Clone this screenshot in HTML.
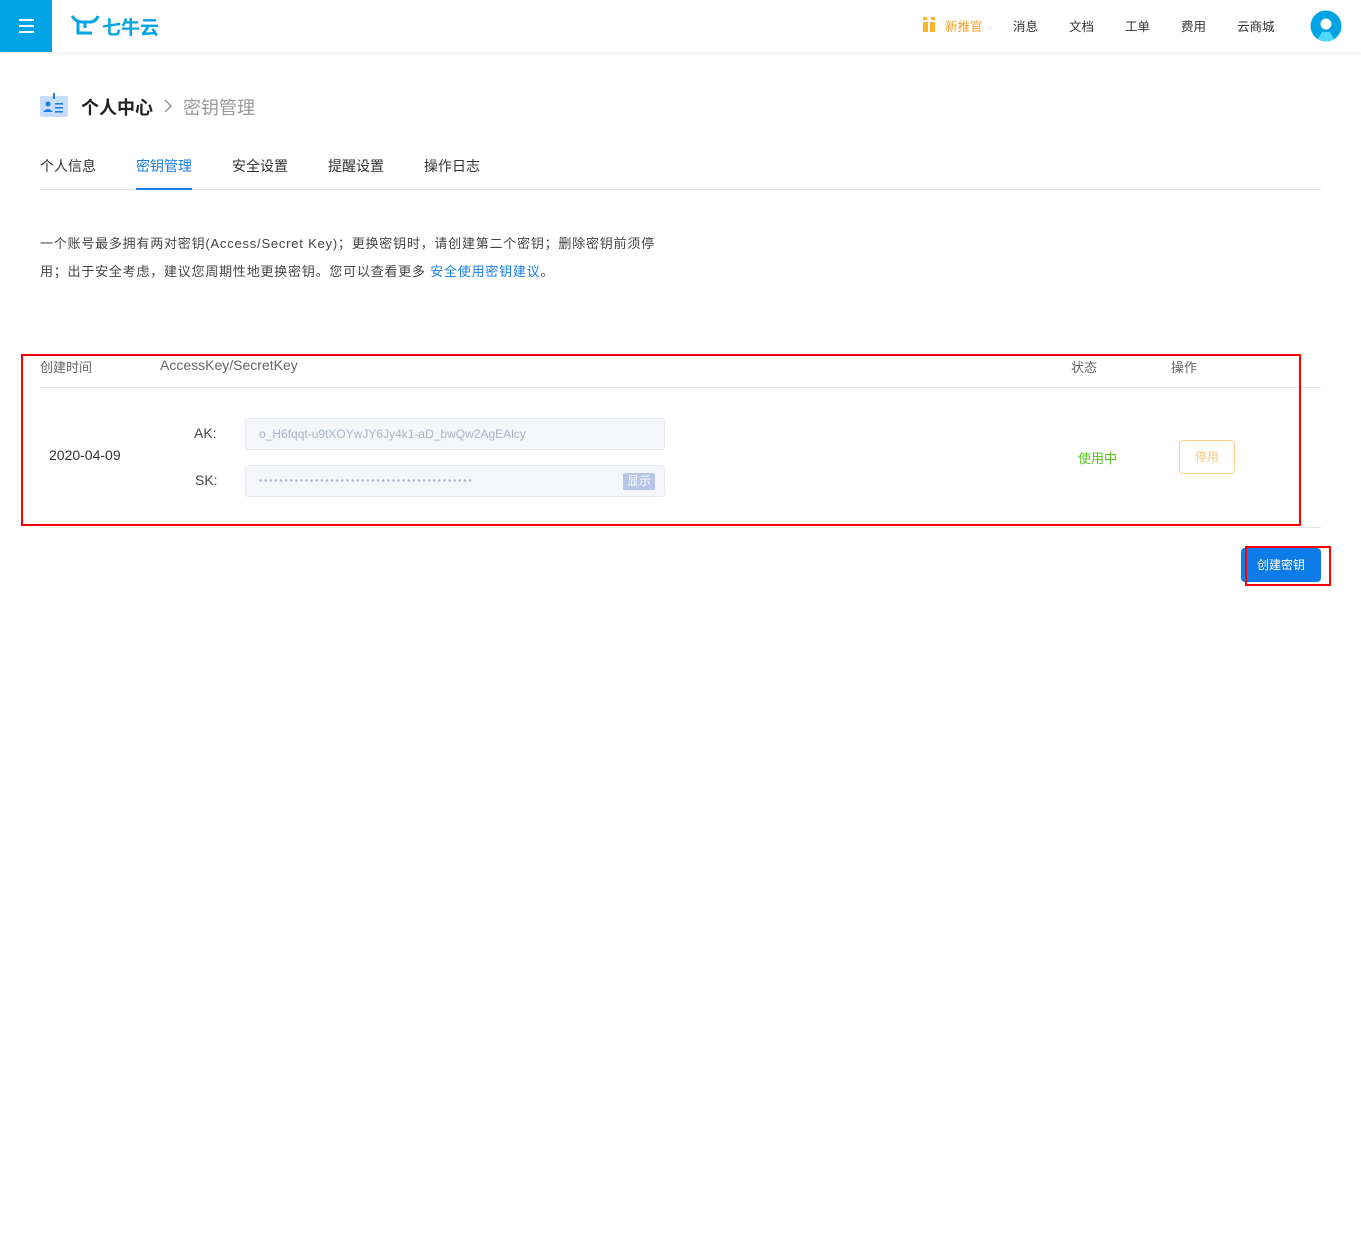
<!DOCTYPE html>
<html><head><meta charset="utf-8"><style>
*{margin:0;padding:0;box-sizing:border-box}
body{width:1361px;height:1257px;background:#fff;font-family:"Liberation Sans","Noto Sans CJK SC",sans-serif;color:#333;position:relative;overflow:hidden}
.a{position:absolute}
.hdr{left:0;top:0;width:1361px;height:52px;background:#fff;box-shadow:0 2px 6px rgba(0,0,0,.06)}
.menu{left:0;top:0;width:52px;height:52px;background:#00a4e4}
.menu i{position:absolute;left:19px;width:15px;height:2px;background:#fff}
.nav{top:16px;font-size:12.5px;color:#333}
.tabs{top:156px;font-size:14px;color:#333}
</style></head><body>
<div class="a hdr"></div>
<div class="a menu"><i style="top:19px"></i><i style="top:25px"></i><i style="top:31px"></i></div>
<svg class="a" style="left:70px;top:14px" width="30" height="22" viewBox="0 0 30 22"><path d="M2 2 Q6 8 12 8 L20 8 Q26 8 28 2 M8 8 L8 19 L22 19 M15 8 L15 14" stroke="#00a4e4" stroke-width="3" fill="none"/></svg>
<div class="a" style="left:102px;top:13px;font-size:19px;font-weight:bold;color:#00a4e4">七牛云</div>
<svg class="a" style="left:922px;top:17px" width="14" height="16"><rect x="1" y="5" width="5" height="10" fill="#f7b52c"/><rect x="8" y="5" width="5" height="10" fill="#f7b52c"/><rect x="1" y="0" width="4" height="3" fill="#f7b52c"/><rect x="9" y="0" width="4" height="3" fill="#f7b52c"/></svg>
<div class="a nav" style="left:945px;color:#f7a02c">新推官</div>
<div class="a nav" style="left:1013px">消息</div>
<div class="a nav" style="left:1069px">文档</div>
<div class="a nav" style="left:1125px">工单</div>
<div class="a nav" style="left:1181px">费用</div>
<div class="a nav" style="left:1237px">云商城</div>
<svg class="a" style="left:1310px;top:10px" width="32" height="32"><clipPath id="c"><circle cx="16" cy="16" r="15.5"/></clipPath><circle cx="16" cy="16" r="15.5" fill="#00a4e4"/><g clip-path="url(#c)"><path d="M6 32 L12 22 L20 22 L26 32Z" fill="#4fd8fa"/><circle cx="16" cy="14" r="5.5" fill="#fff"/></g></svg>

<svg class="a" style="left:40px;top:93px" width="28" height="25"><rect x="0" y="3" width="28" height="21" rx="2" fill="#c6defa"/><rect x="13" y="0" width="2" height="6" fill="#1a7ee8"/><circle cx="8" cy="11" r="2.5" fill="#1a7ee8"/><path d="M3 19 Q8 13 13 19Z" fill="#1a7ee8"/><rect x="15" y="10" width="8" height="1.6" fill="#1a7ee8"/><rect x="15" y="14" width="8" height="1.6" fill="#1a7ee8"/><rect x="15" y="18" width="8" height="1.6" fill="#1a7ee8"/></svg>
<div class="a" style="left:81px;top:94px;font-size:18px;font-weight:bold;color:#222">个人中心</div>
<svg class="a" style="left:163px;top:99px" width="10" height="14"><path d="M2 1 L8 7 L2 13" stroke="#999" stroke-width="1.5" fill="none"/></svg>
<div class="a" style="left:183px;top:94px;font-size:18px;color:#999">密钥管理</div>

<div class="a tabs" style="left:40px">个人信息</div>
<div class="a tabs" style="left:136px;color:#1a7ee8">密钥管理</div>
<div class="a tabs" style="left:232px">安全设置</div>
<div class="a tabs" style="left:328px">提醒设置</div>
<div class="a tabs" style="left:424px">操作日志</div>
<div class="a" style="left:40px;top:189px;width:1281px;height:1px;background:#e5e5e5"></div>
<div class="a" style="left:136px;top:188px;width:56px;height:2px;background:#1a7ee8"></div>

<div class="a" style="left:40px;top:230px;width:700px;font-size:13px;line-height:28px;color:#444;letter-spacing:0.78px;white-space:nowrap">一个账号最多拥有两对密钥(Access/Secret Key)；更换密钥时，请创建第二个密钥；删除密钥前须停<br>用；出于安全考虑，建议您周期性地更换密钥。您可以查看更多 <span style="color:#1a7ee8">安全使用密钥建议</span>。</div>

<div class="a" style="left:40px;top:357px;font-size:13px;color:#666">创建时间</div>
<div class="a" style="left:160px;top:357px;font-size:14px;color:#666">AccessKey/SecretKey</div>
<div class="a" style="left:1071px;top:357px;font-size:13px;color:#666">状态</div>
<div class="a" style="left:1171px;top:357px;font-size:13px;color:#666">操作</div>
<div class="a" style="left:40px;top:387px;width:1281px;height:1px;background:#e5e5e5"></div>
<div class="a" style="left:49px;top:447px;font-size:14px;color:#333">2020-04-09</div>
<div class="a" style="left:194px;top:425px;font-size:14px;color:#444">AK:</div>
<div class="a" style="left:195px;top:472px;font-size:14px;color:#444">SK:</div>
<div class="a" style="left:245px;top:418px;width:420px;height:32px;background:#f4f6fa;border:1px solid #e6e9ee;border-radius:3px;font-size:12px;color:#a9b4c8;padding:8px 13px">o_H6fqqt-u9tXOYwJY6Jy4k1-aD_bwQw2AgEAlcy</div>
<div class="a" style="left:245px;top:465px;width:420px;height:32px;background:#f4f6fa;border:1px solid #e6e9ee;border-radius:3px"></div>
<div class="a" style="left:258px;top:479px;width:215px;height:3px;background:radial-gradient(circle,#a9b4c8 1.1px,transparent 1.4px) 0 0/5.12px 3px repeat-x"></div>
<div class="a" style="left:623px;top:473px;width:32px;height:17px;background:#b7c6e6;color:#fff;font-size:12px;text-align:center;line-height:17px;border-radius:2px">显示</div>
<div class="a" style="left:1078px;top:448px;font-size:13px;color:#52c41a">使用中</div>
<div class="a" style="left:1179px;top:440px;width:56px;height:34px;border:1px solid #fbd38d;border-radius:4px;color:#fbc97a;font-size:12px;text-align:center;line-height:32px">停用</div>
<div class="a" style="left:40px;top:527px;width:1281px;height:1px;background:#e5e5e5"></div>
<div class="a" style="left:21px;top:354px;width:1280px;height:172px;border:2px solid #f00"></div>
<div class="a" style="left:1241px;top:548px;width:80px;height:34px;background:#0d7ce8;border-radius:4px;color:#fff;font-size:12px;text-align:center;line-height:34px">创建密钥</div>
<div class="a" style="left:1245px;top:546px;width:86px;height:40px;border:2px solid #f00"></div>
</body></html>
